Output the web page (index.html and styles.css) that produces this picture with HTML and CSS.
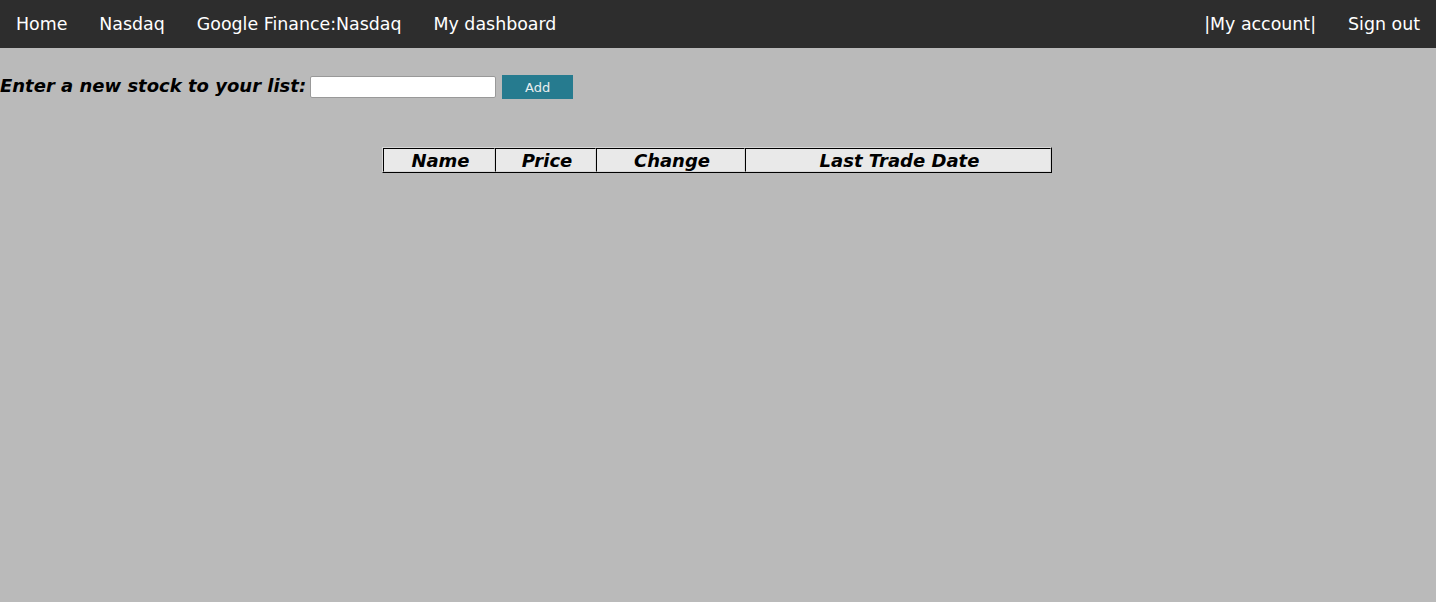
FILE: index.html
```html
<!DOCTYPE html>
<html>
<head>
<meta charset="utf-8">
<link rel="stylesheet" href="styles.css">
</head>
<body>
<nav class="topnav">
  <div class="nav-left">
    <a href="#">Home</a>
    <a href="#">Nasdaq</a>
    <a href="#">Google Finance:Nasdaq</a>
    <a href="#">My dashboard</a>
  </div>
  <div class="nav-right">
    <a href="#">|My account|</a>
    <a href="#">Sign out</a>
  </div>
</nav>
<form class="add-form">
  <label class="add-label">Enter a new stock to your list:</label>
  <input class="add-input" type="text">
  <button class="add-btn" type="button">Add</button>
</form>
<div class="table-wrap">
<table class="stocks">
  <thead>
    <tr>
      <th class="c-name">Name</th>
      <th class="c-price">Price</th>
      <th class="c-change">Change</th>
      <th class="c-date">Last Trade Date</th>
    </tr>
  </thead>
</table>
</div>
</body>
</html>
```
FILE: styles.css
```css
html, body {
  margin: 0;
  padding: 0;
  background: #bababa;
  font-family: "DejaVu Sans", sans-serif;
}
.topnav {
  display: flex;
  justify-content: space-between;
  background: #2d2d2d;
  height: 48px;
}
.nav-left, .nav-right {
  display: flex;
}
.topnav a {
  color: #fff;
  text-decoration: none;
  font-size: 17.4px;
  line-height: 47px;
  padding: 1px 16px 0;
}
.add-form {
  display: flex;
  align-items: center;
  margin: 26px 0 0 0;
  height: 25px;
}
.add-label {
  font-weight: bold;
  font-style: italic;
  font-size: 18px;
  color: #000;
  margin: 0 4px 2px 0;
}
.add-input {
  box-sizing: border-box;
  width: 186px;
  height: 22px;
  border: 1px solid #999;
  border-radius: 2px;
  background: #fff;
  margin: 0 6px 0 0;
  padding: 0;
}
.add-btn {
  box-sizing: border-box;
  width: 71px;
  height: 24px;
  border: none;
  background: #267b8f;
  color: #e8eef0;
  font-family: "DejaVu Sans", sans-serif;
  font-size: 13px;
  padding: 1px 0 0;
}
.table-wrap {
  display: flex;
  justify-content: center;
  padding: 48px 2px 0 0;
}
.stocks {
  border-collapse: separate;
  border-spacing: 0;
  border: 1px solid;
  border-color: #d8d8d8 #000 #000 #d8d8d8;
  width: 670px;
  table-layout: fixed;
}
.stocks th {
  background: #e9e9e9;
  font-weight: bold;
  font-style: italic;
  font-size: 18px;
  padding: 2px 0 0 3px;
  height: 20px;
  line-height: 20px;
  border: 1px solid;
  border-color: #000 #d8d8d8 #d8d8d8 #000;
  text-align: center;
}
.c-name { width: 107px; }
.c-price { width: 96px; }
.c-change { width: 144px; }
.c-date { width: auto; }
```
